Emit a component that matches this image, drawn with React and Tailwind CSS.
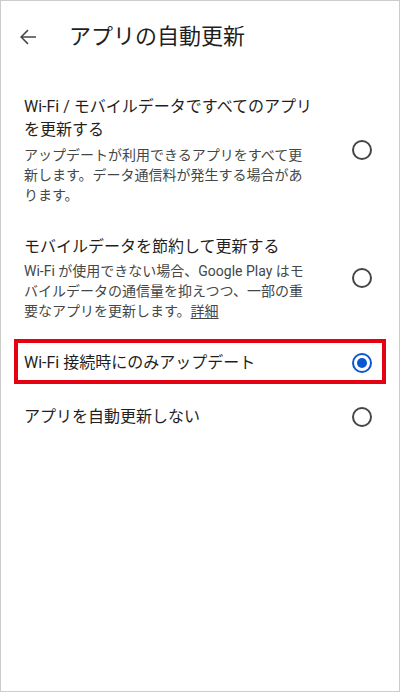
import React from 'react';

const font = { fontFamily: 'Roboto, "Noto Sans CJK JP", sans-serif' };

function Radio({ checked }) {
  if (checked) {
    return (
      <div className="w-5 h-5 rounded-full border-2 border-[#0b57d0] flex items-center justify-center shrink-0">
        <div className="w-[10px] h-[10px] rounded-full bg-[#0b57d0]" />
      </div>
    );
  }
  return <div className="w-5 h-5 rounded-full border-2 border-[#444746] shrink-0" />;
}

function Option({ title, desc, checked, highlight, className = '' }) {
  return (
    <div className={`relative flex items-center justify-between pl-[23px] pr-[27px] ${className}`}>
      <div className="w-[295px]">
        <div className="text-[16px] leading-[23px] text-[#1f1f1f]">{title}</div>
        {desc && <div className="mt-[3.5px] text-[14px] leading-[20px] text-[#444746]">{desc}</div>}
      </div>
      <Radio checked={checked} />
      {highlight && (
        <div className="absolute left-[13px] top-[3px] w-[372px] h-[45px] border-4 border-[#e50012] pointer-events-none" />
      )}
    </div>
  );
}

export default function App() {
  return (
    <div className="w-[400px] h-[692px] bg-white border border-[#cccccc] box-border" style={font}>
      <header className="h-[71px] flex items-center">
        <svg className="ml-[15px] w-6 h-6" viewBox="0 0 24 24" fill="#444746">
          <path d="M20 11.25H6.9l5.6-5.6L11.45 4.6 4.05 12l7.4 7.4 1.05-1.05-5.6-5.6H20v-1.5z" />
        </svg>
        <h1 className="ml-[29px] text-[22px] text-[#1f1f1f] font-normal">アプリの自動更新</h1>
      </header>

      <div className="pt-[8px]">
        <Option
          className="py-[15px]"
          title={<>Wi-Fi / モバイルデータですべてのアプリ<br />を更新する</>}
          desc={<>アップデートが利用できるアプリをすべて更<br />新します。データ通信料が発生する場合があ<br />ります。</>}
        />
        <Option
          className="py-[15px]"
          title="モバイルデータを節約して更新する"
          desc={<>Wi-Fi が使用できない場合、Google Play はモ<br />バイルデータの通信量を抑えつつ、一部の重<br />要なアプリを更新します。<span className="underline underline-offset-2">詳細</span></>}
        />
        <Option className="h-[53px]" title="Wi-Fi 接続時にのみアップデート" checked highlight />
        <Option className="h-[55px]" title="アプリを自動更新しない" />
      </div>
    </div>
  );
}
